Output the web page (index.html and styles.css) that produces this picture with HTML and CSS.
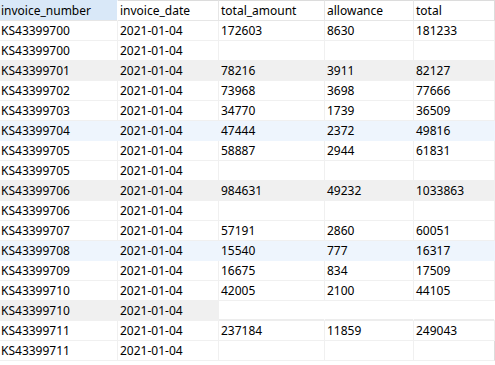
FILE: index.html
```html
<!DOCTYPE html>
<html>
<head>
<meta charset="utf-8">
<link rel="stylesheet" href="styles.css">
</head>
<body>
<table class="grid">
  <colgroup>
    <col class="c1"><col class="c2"><col class="c3"><col class="c4"><col class="c5">
  </colgroup>
  <thead>
    <tr>
      <th class="sel">invoice_number</th><th>invoice_date</th><th>total_amount</th><th>allowance</th><th>total</th>
    </tr>
  </thead>
  <tbody>
    <tr><td>KS43399700</td><td>2021-01-04</td><td>172603</td><td>8630</td><td>181233</td></tr>
    <tr><td>KS43399700</td><td>2021-01-04</td><td></td><td></td><td></td></tr>
    <tr class="gray"><td>KS43399701</td><td>2021-01-04</td><td>78216</td><td>3911</td><td>82127</td></tr>
    <tr><td>KS43399702</td><td>2021-01-04</td><td>73968</td><td>3698</td><td>77666</td></tr>
    <tr><td>KS43399703</td><td>2021-01-04</td><td>34770</td><td>1739</td><td>36509</td></tr>
    <tr class="blue"><td>KS43399704</td><td>2021-01-04</td><td>47444</td><td>2372</td><td>49816</td></tr>
    <tr><td>KS43399705</td><td>2021-01-04</td><td>58887</td><td>2944</td><td>61831</td></tr>
    <tr><td>KS43399705</td><td>2021-01-04</td><td></td><td></td><td></td></tr>
    <tr class="gray"><td>KS43399706</td><td>2021-01-04</td><td>984631</td><td>49232</td><td>1033863</td></tr>
    <tr><td>KS43399706</td><td>2021-01-04</td><td></td><td></td><td></td></tr>
    <tr><td>KS43399707</td><td>2021-01-04</td><td>57191</td><td>2860</td><td>60051</td></tr>
    <tr class="blue"><td>KS43399708</td><td>2021-01-04</td><td>15540</td><td>777</td><td>16317</td></tr>
    <tr><td>KS43399709</td><td>2021-01-04</td><td>16675</td><td>834</td><td>17509</td></tr>
    <tr><td>KS43399710</td><td>2021-01-04</td><td>42005</td><td>2100</td><td>44105</td></tr>
    <tr class="part"><td class="g">KS43399710</td><td class="g">2021-01-04</td><td class="void"></td><td class="void"></td><td class="void"></td></tr>
    <tr class="after"><td>KS43399711</td><td>2021-01-04</td><td>237184</td><td>11859</td><td>249043</td></tr>
    <tr><td>KS43399711</td><td>2021-01-04</td><td></td><td></td><td></td></tr>
  </tbody>
</table>
</body>
</html>
```
FILE: styles.css
```css
html, body {
  margin: 0;
  padding: 0;
  background: #ffffff;
}
body {
  width: 495px;
  height: 365px;
  overflow: hidden;
  font-family: "Noto Sans", "Open Sans", sans-serif;
  font-size: 12px;
  color: #000000;
}
.grid {
  border-collapse: separate;
  border-spacing: 0;
  table-layout: fixed;
  width: 495px;
}
.c1 { width: 118px; }
.c2 { width: 101px; }
.c3 { width: 106px; }
.c4 { width: 89px; }
.c5 { width: 81px; }
.grid th, .grid td {
  box-sizing: border-box;
  height: 20px;
  padding: 0 0 0 2px;
  text-align: left;
  font-weight: normal;
  white-space: nowrap;
  overflow: hidden;
  line-height: 19px;
  border-right: 1px solid #f0f0f0;
  border-bottom: 1px solid #f0f0f0;
}
.grid td:first-child, .grid th:first-child {
  padding-left: 1px;
}
.grid th {
  height: 21px;
  line-height: 19px;
  border-top: 1px solid #dcdcdc;
  border-right: 1px solid #e6e6e6;
  border-bottom: 1px solid #e6e6e6;
}
.grid th.sel {
  background: #d9e8f8;
  border-top-color: #d9e8f8;
  border-right-color: #ffffff;
}
.grid tr:last-child td:last-child, .grid th:last-child {
  border-right-color: #dcdcdc;
}
.gray td {
  background: #f0f0f0;
  border-color: #f0f0f0;
}
.blue td {
  background: #eef5fd;
  border-color: #eef5fd;
}
.part td.g {
  background: #f0f0f0;
  border-color: #f0f0f0;
}
.part td.void {
  border-right-color: #ffffff;
  border-bottom: 2px solid #ededed;
}
.after td {
  height: 19px;
}
```
